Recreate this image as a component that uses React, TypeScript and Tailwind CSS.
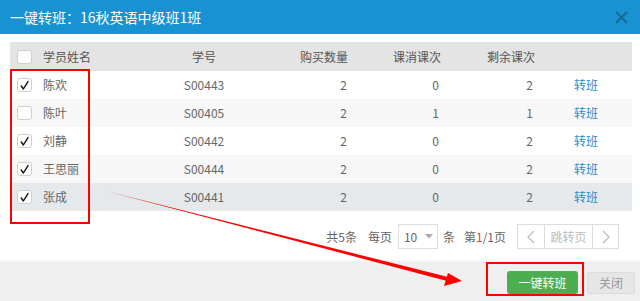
import React from "react";

const font = '"Noto Sans CJK SC", "Noto Sans", sans-serif';

type Row = { name: string; id: string; buy: number; used: number; left: number; checked: boolean; bg: string };

const rows: Row[] = [
  { name: "陈欢", id: "S00443", buy: 2, used: 0, left: 2, checked: true, bg: "bg-white" },
  { name: "陈叶", id: "S00405", buy: 2, used: 1, left: 1, checked: false, bg: "bg-[#f7f7f7]" },
  { name: "刘静", id: "S00442", buy: 2, used: 0, left: 2, checked: true, bg: "bg-white" },
  { name: "王思丽", id: "S00444", buy: 2, used: 0, left: 2, checked: true, bg: "bg-[#f7f7f7]" },
  { name: "张成", id: "S00441", buy: 2, used: 0, left: 2, checked: true, bg: "bg-[#e6e9ec]" },
];

function Box({ checked }: { checked: boolean }) {
  return (
    <div className="w-[15px] h-[14px] rounded-[3px] border border-[#cfcfcf] bg-white flex items-center justify-center">
      {checked && (
        <svg width="11" height="11" viewBox="0 0 11 11">
          <path d="M2.2 6 L4.4 9 L9 1.6" fill="none" stroke="#111" strokeWidth="1.4" strokeLinecap="round" strokeLinejoin="round" />
        </svg>
      )}
    </div>
  );
}

const cols = "grid grid-cols-[26px_114px_108px_100px_93px_94px_87px]";

export default function App() {
  return (
    <div className="relative w-[640px] h-[301px] bg-white overflow-hidden flex flex-col" style={{ fontFamily: font }}>
      {/* header */}
      <div className="h-[34px] bg-[#1892d0] flex items-center justify-between pl-[10px] pr-[12px] shrink-0">
        <span className="text-white text-[14px] leading-none">一键转班：16秋英语中级班1班</span>
        <svg width="13" height="13" viewBox="0 0 13 13">
          <path d="M1 1 L12 12 M12 1 L1 12" stroke="#1a6a99" strokeWidth="2.2" />
        </svg>
      </div>

      {/* body */}
      <div className="flex-1 pl-[10px] pr-[8px] pt-[8px]">
        <div className={`${cols} h-[29px] bg-[#e4e4e4] items-center text-[12px] text-[#555]`}>
          <div className="pl-[7px]"><Box checked={false} /></div>
          <div className="pl-[7px]">学员姓名</div>
          <div className="text-center">学号</div>
          <div className="text-right pr-[10px]">购买数量</div>
          <div className="text-right pr-[10px]">课消课次</div>
          <div className="text-right pr-[10px]">剩余课次</div>
          <div></div>
        </div>
        {rows.map((r) => (
          <div key={r.id} className={`${cols} h-[28px] ${r.bg} items-center text-[12px] text-[#666]`}>
            <div className="pl-[7px]"><Box checked={r.checked} /></div>
            <div className="pl-[7px]">{r.name}</div>
            <div className="text-center">{r.id}</div>
            <div className="text-right pr-[11px]">{r.buy}</div>
            <div className="text-right pr-[12px]">{r.used}</div>
            <div className="text-right pr-[12px]">{r.left}</div>
            <div className="pl-[29px] text-[#2a8bcb]">转班</div>
          </div>
        ))}

        {/* pagination */}
        <div className="mt-[13px] flex items-center justify-end pr-[13px] text-[12px] text-[#666] h-[25px]">
          <span>共5条</span>
          <span className="ml-[11px]">每页</span>
          <div className="ml-[6px] w-[40px] h-[25px] border border-[#ddd] flex items-center pl-[5px] text-[#666]">
            <span>10</span>
            <svg className="ml-[8px]" width="8" height="5" viewBox="0 0 8 5">
              <path d="M0 0 L8 0 L4 4.5 Z" fill="#aaa" />
            </svg>
          </div>
          <span className="ml-[5px]">条</span>
          <span className="ml-[9px]">
            第<span className="text-[#e8412b]">1</span>/1页
          </span>
          <div className="ml-[11px] flex h-[25px] border border-[#ddd] text-[#bbb]">
            <div className="w-[27px] flex items-center justify-center border-r border-[#ddd]">
              <svg width="8" height="14" viewBox="0 0 8 14"><path d="M7 1 L1 7 L7 13" fill="none" stroke="#bbb" strokeWidth="1.2" /></svg>
            </div>
            <div className="w-[48px] flex items-center justify-center border-r border-[#ddd]">跳转页</div>
            <div className="w-[25px] flex items-center justify-center">
              <svg width="8" height="14" viewBox="0 0 8 14"><path d="M1 1 L7 7 L1 13" fill="none" stroke="#bbb" strokeWidth="1.2" /></svg>
            </div>
          </div>
        </div>
      </div>

      {/* footer */}
      <div className="h-[41px] shrink-0 bg-[#efefef] border-t-[2px] border-[#f6f6f6] flex items-start justify-end pr-[5px] pt-[9px]">
        <button className="w-[71px] h-[23px] rounded-[3px] bg-[#4cae50] text-white text-[12px] flex items-center justify-center">一键转班</button>
        <button className="ml-[9px] mt-[1px] w-[48px] h-[22px] rounded-[2px] bg-[#e6e6e6] border border-[#dcdcdc] text-[#999] text-[12px] flex items-center justify-center">关闭</button>
      </div>

      {/* annotations */}
      <div className="absolute left-[10px] top-[69px] w-[80px] h-[155px] border-2 border-[#f00] pointer-events-none" />
      <div className="absolute left-[486px] top-[262px] w-[98px] h-[34px] border-2 border-[#f00] pointer-events-none" />
      <svg className="absolute left-0 top-0 pointer-events-none" width="640" height="301" viewBox="0 0 640 301">
        <path d="M106 191 L450 277.6 L449 281.4 Z" fill="#f00" />
        <path d="M462 281 L444 286 L448 273 Z" fill="#f00" />
      </svg>
    </div>
  );
}
